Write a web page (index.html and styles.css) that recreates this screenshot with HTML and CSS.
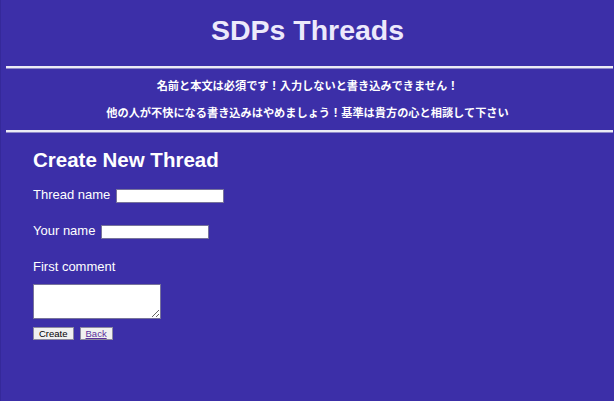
FILE: index.html
```html
<!DOCTYPE html>
<html lang="ja">
<head>
<meta charset="utf-8">
<title>SDPs Threads</title>
<link rel="stylesheet" href="styles.css">
</head>
<body>
<header class="site-header">
  <h1 class="site-title">SDPs Threads</h1>
</header>
<hr class="rule">
<section class="notices">
  <p class="notice notice-first">名前と本文は必須です！入力しないと書き込みできません！</p>
  <p class="notice notice-second">他の人が不快になる書き込みはやめましょう！基準は貴方の心と相談して下さい</p>
</section>
<hr class="rule">
<main class="content">
  <h2 class="form-title">Create New Thread</h2>
  <form class="thread-form">
    <div class="row row-first">
      <label class="label" for="tname">Thread name</label>
      <input class="text-input" id="tname" type="text">
    </div>
    <div class="row">
      <label class="label" for="uname">Your name</label>
      <input class="text-input" id="uname" type="text">
    </div>
    <div class="row">
      <label class="label" for="comment">First comment</label>
    </div>
    <textarea class="comment" id="comment"></textarea>
    <div class="actions">
      <button class="btn" type="button">Create</button>
      <button class="btn" type="button"><a class="back-link" href="#">Back</a></button>
    </div>
  </form>
</main>
</body>
</html>
```

FILE: styles.css
```css
html, body {
  margin: 0;
  padding: 0;
}

body {
  background: #3c2fa8;
  color: #ffffff;
  font-family: "Liberation Sans", Arial, "Noto Sans CJK JP", sans-serif;
  min-height: 401px;
  border-left: 1px solid #35299a;
  box-sizing: border-box;
}

.site-header {
  padding-top: 12px;
}

.site-title {
  margin: 0;
  font-size: 28.5px;
  line-height: 36px;
  font-weight: bold;
  text-align: center;
  color: #ece9fb;
}

.rule {
  border: 0;
  height: 2px;
  margin: 18px 1px 0 5px;
  background: #ecebf5;
  box-shadow: 0 1px 0 #8f89c9;
}

.notices {
  padding: 10px 0 9px;
}

.notice {
  margin: 0;
  font-family: "Liberation Sans", "Noto Sans CJK JP", sans-serif;
  font-size: 11.2px;
  line-height: 16px;
  font-weight: bold;
  text-align: center;
  color: #ffffff;
}

.notice-second {
  margin-top: 11px;
}

.notices + .rule {
  margin-top: 0;
}

.content {
  padding-left: 32px;
  padding-top: 16px;
}

.form-title {
  margin: 0;
  font-size: 20.5px;
  line-height: 24px;
  font-weight: bold;
}

.thread-form {
  margin: 0;
}

.row {
  display: flex;
  align-items: center;
  gap: 6px;
  height: 18px;
  margin-top: 18px;
  font-size: 13px;
}

.row-first {
  margin-top: 14px;
}

.label {
  line-height: 18px;
}

.text-input {
  width: 108px;
  height: 14px;
  box-sizing: border-box;
  border: 1px solid #77739b;
  background: #ffffff;
  padding: 0 2px;
  margin: 2px 0 0;
  font-size: 10px;
}

.comment {
  display: block;
  width: 128px;
  height: 35px;
  box-sizing: border-box;
  margin: 8px 0 0;
  border: 1px solid #77739b;
  background: #ffffff;
  padding: 2px;
  font-size: 10px;
}

.actions {
  display: flex;
  gap: 6px;
  margin-top: 8px;
}

.btn {
  height: 13px;
  box-sizing: border-box;
  padding: 0 5px;
  border: 1px solid #8c8aa0;
  background: #f0f0f0;
  color: #000000;
  font-family: "Liberation Sans", Arial, sans-serif;
  font-size: 9.5px;
  line-height: 11px;
  border-radius: 0;
}

.back-link {
  color: #5b2f9b;
  text-decoration: underline;
}
```
